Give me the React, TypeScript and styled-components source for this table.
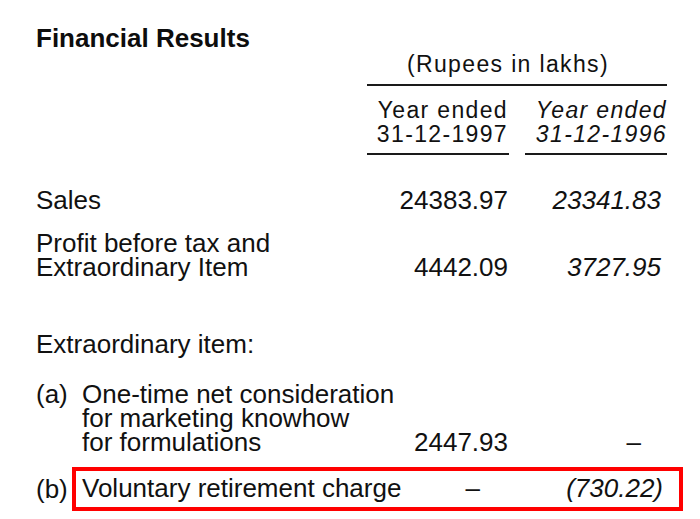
import styled, { createGlobalStyle } from 'styled-components';

const COLUMNS = '331px 142px 16px 142px';

const GlobalStyle = createGlobalStyle`
  body {
    margin: 0;
    background: #fff;
    color: #111;
    font-family: "Liberation Sans", Arial, Helvetica, sans-serif;
  }
`;

const Page = styled.div`
  width: 700px;
  height: 519px;
  box-sizing: border-box;
  padding: 25px 0 0 36px;
  overflow: hidden;
`;

const Title = styled.h1`
  margin: 0;
  font-size: 26px;
  line-height: 26px;
  font-weight: 700;
  color: #0d0d0d;
`;

const HeadRow = styled.div<{ $top: number }>`
  display: grid;
  grid-template-columns: ${COLUMNS};
  margin-top: ${(p) => p.$top}px;
  font-size: 23px;
  line-height: 24px;
  letter-spacing: 1.35px;
`;

const Caption = styled.div`
  grid-column: 2 / 5;
  padding: 0 0 8px 40px;
  border-bottom: 2px solid #1a1a1a;
`;

const HeadCell = styled.div<{ $col: number; $italic?: boolean; $pad: number }>`
  grid-column: ${(p) => p.$col};
  text-align: right;
  padding: 0 ${(p) => p.$pad}px 7px 0;
  font-style: ${(p) => (p.$italic ? 'italic' : 'normal')};
  border-bottom: 2px solid #1a1a1a;
`;

const HeadLine = styled.span`
  display: block;
`;

const Row = styled.div<{ $top: number }>`
  display: grid;
  grid-template-columns: ${COLUMNS};
  align-items: end;
  margin-top: ${(p) => p.$top}px;
  font-size: 26px;
  line-height: 24px;
`;

const Label = styled.div`
  grid-column: 1;
  display: flex;
  white-space: nowrap;
`;

const Marker = styled.span<{ $width: number }>`
  flex: none;
  width: ${(p) => p.$width}px;
`;

const Amount = styled.div<{ $col: number; $italic?: boolean; $pad: number }>`
  grid-column: ${(p) => p.$col};
  text-align: right;
  padding-right: ${(p) => p.$pad}px;
  font-style: ${(p) => (p.$italic ? 'italic' : 'normal')};
  white-space: nowrap;
`;

const Dash = styled.span<{ $offset: number }>`
  display: inline-block;
  margin-right: ${(p) => p.$offset}px;
`;

const FlaggedRow = styled.div`
  display: flex;
  align-items: center;
  margin-top: 13px;
  font-size: 26px;
  line-height: 24px;
`;

const Highlight = styled.div`
  display: grid;
  grid-template-columns: 285px 142px 16px 142px;
  align-items: end;
  padding: 5px 12px 7px 6px;
  border: 4px solid #ff0000;
`;

const App = () => (
  <>
    <GlobalStyle />
    <Page>
      <Title>Financial Results</Title>

      <HeadRow $top={1}>
        <Caption>(Rupees in lakhs)</Caption>
      </HeadRow>

      <HeadRow $top={12}>
        <HeadCell $col={2} $pad={1}>
          <HeadLine>Year ended</HeadLine>
          <HeadLine>31-12-1997</HeadLine>
        </HeadCell>
        <HeadCell $col={4} $pad={0} $italic>
          <HeadLine>Year ended</HeadLine>
          <HeadLine>31-12-1996</HeadLine>
        </HeadCell>
      </HeadRow>

      <Row $top={33}>
        <Label>Sales</Label>
        <Amount $col={2} $pad={1}>24383.97</Amount>
        <Amount $col={4} $pad={6} $italic>23341.83</Amount>
      </Row>

      <Row $top={19}>
        <Label>
          Profit before tax and
          <br />
          Extraordinary Item
        </Label>
        <Amount $col={2} $pad={1}>4442.09</Amount>
        <Amount $col={4} $pad={6} $italic>3727.95</Amount>
      </Row>

      <Row $top={53}>
        <Label>Extraordinary item:</Label>
      </Row>

      <Row $top={26}>
        <Label>
          <Marker $width={46}>(a)</Marker>
          <span>
            One-time net consideration
            <br />
            for marketing knowhow
            <br />
            for formulations
          </span>
        </Label>
        <Amount $col={2} $pad={1}>2447.93</Amount>
        <Amount $col={4} $pad={6}>
          <Dash $offset={20}>–</Dash>
        </Amount>
      </Row>

      <FlaggedRow>
        <Marker $width={36}>(b)</Marker>
        <Highlight>
          <Label>Voluntary retirement charge</Label>
          <Amount $col={2} $pad={1}>
            <Dash $offset={28}>–</Dash>
          </Amount>
          <Amount $col={4} $pad={4} $italic>(730.22)</Amount>
        </Highlight>
      </FlaggedRow>
    </Page>
  </>
);

export default App;
